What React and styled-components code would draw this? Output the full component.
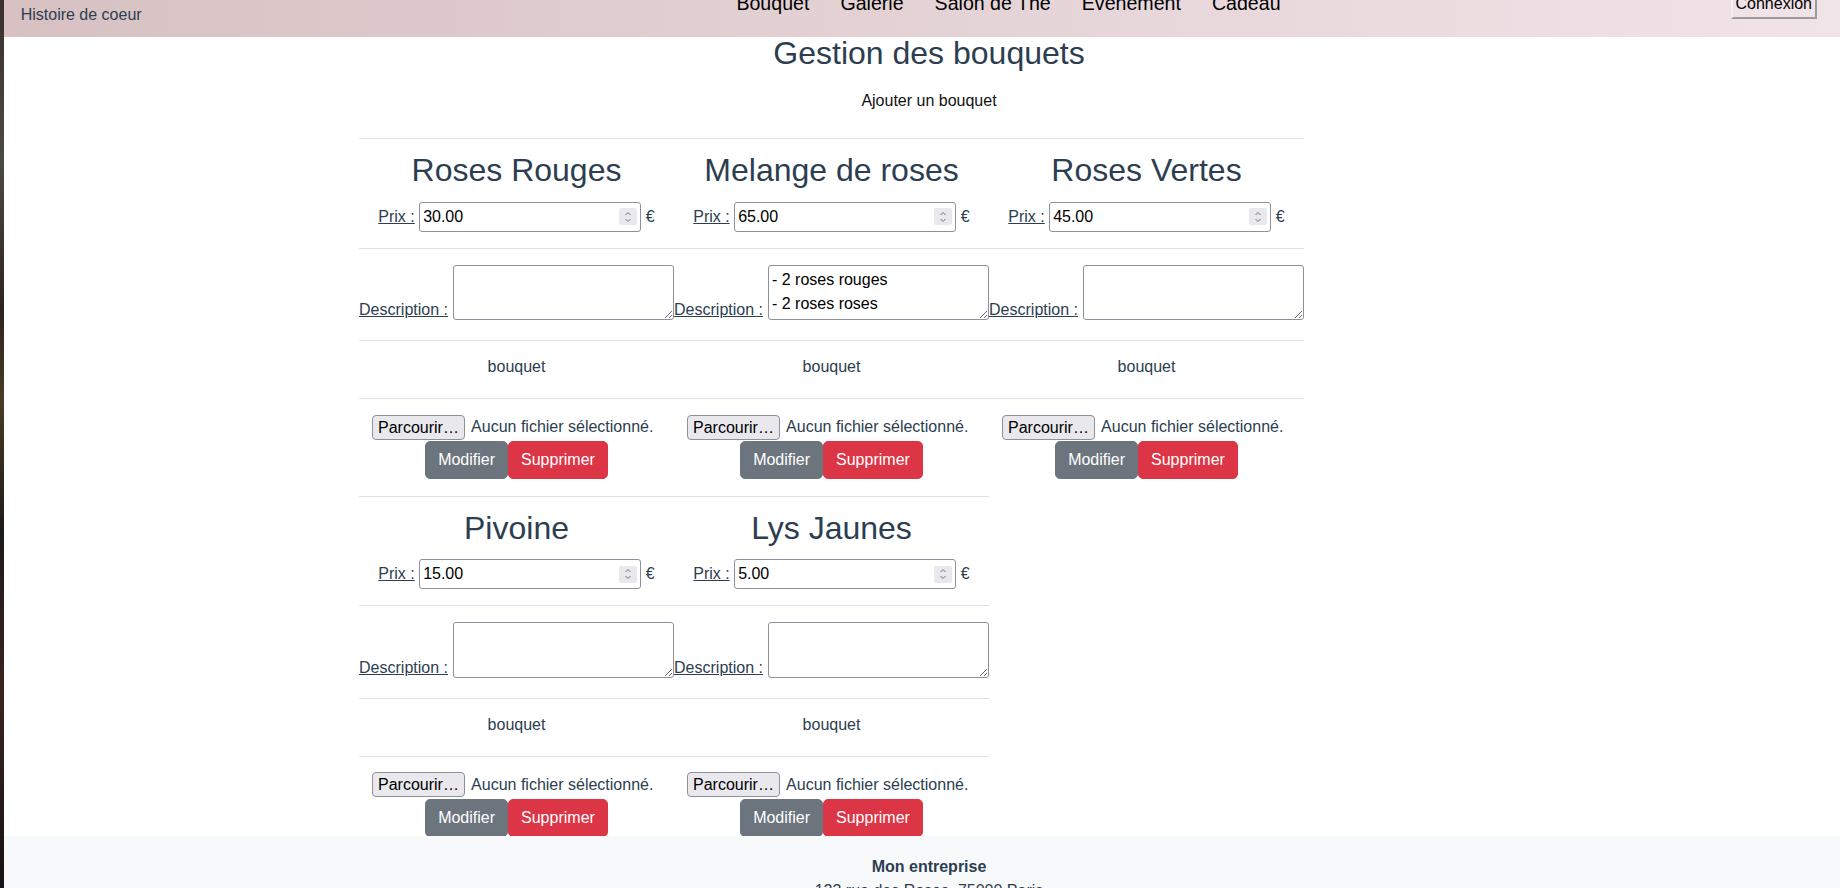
import React from "react";
import styled, { createGlobalStyle } from "styled-components";

const bouquets = [
  { id: 1, nom: "Roses Rouges", prix: "30.00", description: "" },
  {
    id: 2,
    nom: "Melange de roses",
    prix: "65.00",
    description: "- 2 roses rouges\n- 2 roses roses",
  },
  { id: 3, nom: "Roses Vertes", prix: "45.00", description: "" },
  { id: 4, nom: "Pivoine", prix: "15.00", description: "" },
  { id: 5, nom: "Lys Jaunes", prix: "5.00", description: "" },
];

const liens = ["Bouquet", "Galerie", "Salon de The", "Evenement", "Cadeau"];

const Spinner = () => (
  <SpinBox>
    <svg width="10" height="14" viewBox="0 0 10 14" fill="none">
      <path d="M2.5 5 L5 2.5 L7.5 5" stroke="#6e6e78" strokeWidth="1" />
      <path d="M2.5 9 L5 11.5 L7.5 9" stroke="#6e6e78" strokeWidth="1" />
    </svg>
  </SpinBox>
);

const App = () => {
  return (
    <>
      <GlobalStyle />
      <Page>
        <Header>
          <Brand>Histoire de coeur</Brand>
          <Nav>
            {liens.map((lien) => (
              <NavLink key={lien}>{lien}</NavLink>
            ))}
          </Nav>
          <LoginButton>Connexion</LoginButton>
        </Header>

        <Main>
          <Title>Gestion des bouquets</Title>
          <AddLink>Ajouter un bouquet</AddLink>

          {/* ===================== liste des bouquets ===================== */}
          <CardGrid>
            {bouquets.map((item) => {
              const { id, nom, prix, description } = item;
              return (
                <Card key={id}>
                  <Section $pad="12px 0 15px">
                    <CardTitle>{nom}</CardTitle>
                    <PriceRow>
                      <FieldLabel>Prix :</FieldLabel>
                      <PriceBox>
                        <PriceInput type="text" defaultValue={prix} />
                        <Spinner />
                      </PriceBox>
                      <Euro>€</Euro>
                    </PriceRow>
                  </Section>

                  <Section $pad="16px 0 20px">
                    <DescRow>
                      <FieldLabel $lh="20px">Description :</FieldLabel>
                      <DescArea defaultValue={description} />
                    </DescRow>
                  </Section>

                  <Section $pad="14px 0 19px">
                    <AltText>bouquet</AltText>
                  </Section>

                  <Section $pad="14px 0 16.7px">
                    <FileRow>
                      <BrowseButton>Parcourir…</BrowseButton>
                      <FileName>Aucun fichier sélectionné.</FileName>
                    </FileRow>
                    <ActionRow>
                      <ActionButton $bg="#6c757d">Modifier</ActionButton>
                      <ActionButton $bg="#dc3545">Supprimer</ActionButton>
                    </ActionRow>
                  </Section>
                </Card>
              );
            })}
          </CardGrid>
        </Main>

        <Footer>
          <strong>Mon entreprise</strong>
          <span>123 rue des Roses, 75000 Paris</span>
          <span>Tél : 01 23 45 67 89</span>
        </Footer>
      </Page>
    </>
  );
};

export default App;

const GlobalStyle = createGlobalStyle`
  html, body {
    margin: 0;
    height: 100%;
    overflow: hidden;
  }
  body {
    background: linear-gradient(
      to bottom,
      #3a302c 0%,
      #4b4a40 18%,
      #2d241f 35%,
      #4a3b24 45%,
      #1c1a18 60%,
      #3b2420 78%,
      #151313 100%
    );
    font-family: "Liberation Sans", Arial, Helvetica, sans-serif;
  }
`;

const Page = styled.div`
  margin-left: 4px;
  width: 1850px;
  min-height: 100vh;
  background: #fff;
  color: #2c3e50;
  font-size: 16px;
  line-height: 24px;
`;

const Header = styled.header`
  display: flex;
  align-items: flex-start;
  height: 37px;
  overflow: hidden;
  background: linear-gradient(to right, #d7c1c2, #f1e4e9);
`;

const Brand = styled.div`
  flex: 0 0 732.4px;
  box-sizing: border-box;
  padding-left: 16.7px;
  margin-top: 3.4px;
  color: #2c3e50;
`;

const Nav = styled.nav`
  display: flex;
  gap: 31px;
  margin-top: -9.5px;
`;

const NavLink = styled.span`
  font-size: 19.6px;
  line-height: 24px;
  color: #000;
`;

const LoginButton = styled.button`
  margin-left: auto;
  margin-right: 37px;
  margin-top: -11.5px;
  padding: 4px 3px;
  border-style: solid;
  border-width: 2px;
  border-color: #f6eef1 #9c9a9b #9c9a9b #f6eef1;
  background: #f0e3e8;
  font-family: inherit;
  font-size: 16px;
  line-height: 18px;
  color: #000;
`;

const Main = styled.main`
  display: flex;
  flex-direction: column;
  align-items: center;
`;

const Title = styled.h1`
  margin: 0;
  font-size: 32px;
  line-height: 32px;
  font-weight: 400;
  color: #2c3e50;
`;

const AddLink = styled.div`
  margin-top: 19.7px;
  color: #111;
`;

const CardGrid = styled.div`
  display: flex;
  flex-wrap: wrap;
  width: 1140px;
  margin-top: 25.6px;
`;

const Card = styled.div`
  display: flex;
  flex-direction: column;
  width: 315px;
`;

const Section = styled.div`
  display: flex;
  flex-direction: column;
  align-items: center;
  border-top: 1px solid #dee2e6;
  padding: ${(p) => p.$pad};
`;

const CardTitle = styled.h2`
  margin: 0 0 11px;
  font-size: 32px;
  line-height: 38.4px;
  font-weight: 400;
  color: #2c3e50;
`;

const PriceRow = styled.div`
  display: flex;
  align-items: center;
  justify-content: center;
  height: 32px;
`;

const FieldLabel = styled.span`
  text-decoration: underline;
  color: #2c3e50;
  margin-right: 4.4px;
  line-height: ${(p) => p.$lh || "24px"};
`;

const PriceBox = styled.div`
  display: flex;
  align-items: center;
  box-sizing: border-box;
  width: 221.4px;
  height: 30px;
  padding: 0 3px;
  border: 1px solid #8f8f9d;
  border-radius: 3px;
  background: #fff;
`;

const PriceInput = styled.input`
  flex: 1;
  min-width: 0;
  border: none;
  outline: none;
  padding: 0;
  background: transparent;
  font-family: inherit;
  font-size: 16px;
  color: #000;
`;

const SpinBox = styled.span`
  display: flex;
  align-items: center;
  justify-content: center;
  width: 17.7px;
  height: 17.3px;
  border-radius: 2px;
  background: #e9e9ed;
`;

const Euro = styled.span`
  margin-left: 5.3px;
  color: #2c3e50;
`;

const DescRow = styled.div`
  display: flex;
  align-items: flex-end;
  justify-content: center;
`;

const DescArea = styled.textarea`
  display: block;
  box-sizing: border-box;
  width: 221px;
  height: 55.4px;
  margin-left: 0.6px;
  padding: 2px 3px;
  border: 1px solid #8f8f9d;
  border-radius: 3px;
  font-family: inherit;
  font-size: 16px;
  line-height: 24px;
  color: #000;
  resize: both;
`;

const AltText = styled.span`
  line-height: 24px;
  color: #2c3e50;
`;

const FileRow = styled.div`
  display: flex;
  align-items: center;
  height: 28px;
  margin-right: 8px;
`;

const BrowseButton = styled.button`
  box-sizing: border-box;
  height: 25px;
  padding: 0 5.4px;
  border: 1px solid #8f8f9d;
  border-radius: 4px;
  background: #e9e9ed;
  font-family: inherit;
  font-size: 16px;
  line-height: 23px;
  color: #000;
`;

const FileName = styled.span`
  margin-left: 5.8px;
  color: #2c3e50;
`;

const ActionRow = styled.div`
  display: flex;
`;

const ActionButton = styled.button`
  padding: 6px 12px;
  border: 1px solid ${(p) => p.$bg};
  border-radius: 5px;
  background: ${(p) => p.$bg};
  font-family: inherit;
  font-size: 16px;
  line-height: 24px;
  color: #fff;
`;

const Footer = styled.footer`
  position: fixed;
  left: 4px;
  bottom: 0;
  display: flex;
  flex-direction: column;
  align-items: center;
  box-sizing: border-box;
  width: 1850px;
  height: 52px;
  padding-top: 19.3px;
  overflow: hidden;
  background: #f8f9fa;
  color: #2c3e50;
  line-height: 24px;
`;
